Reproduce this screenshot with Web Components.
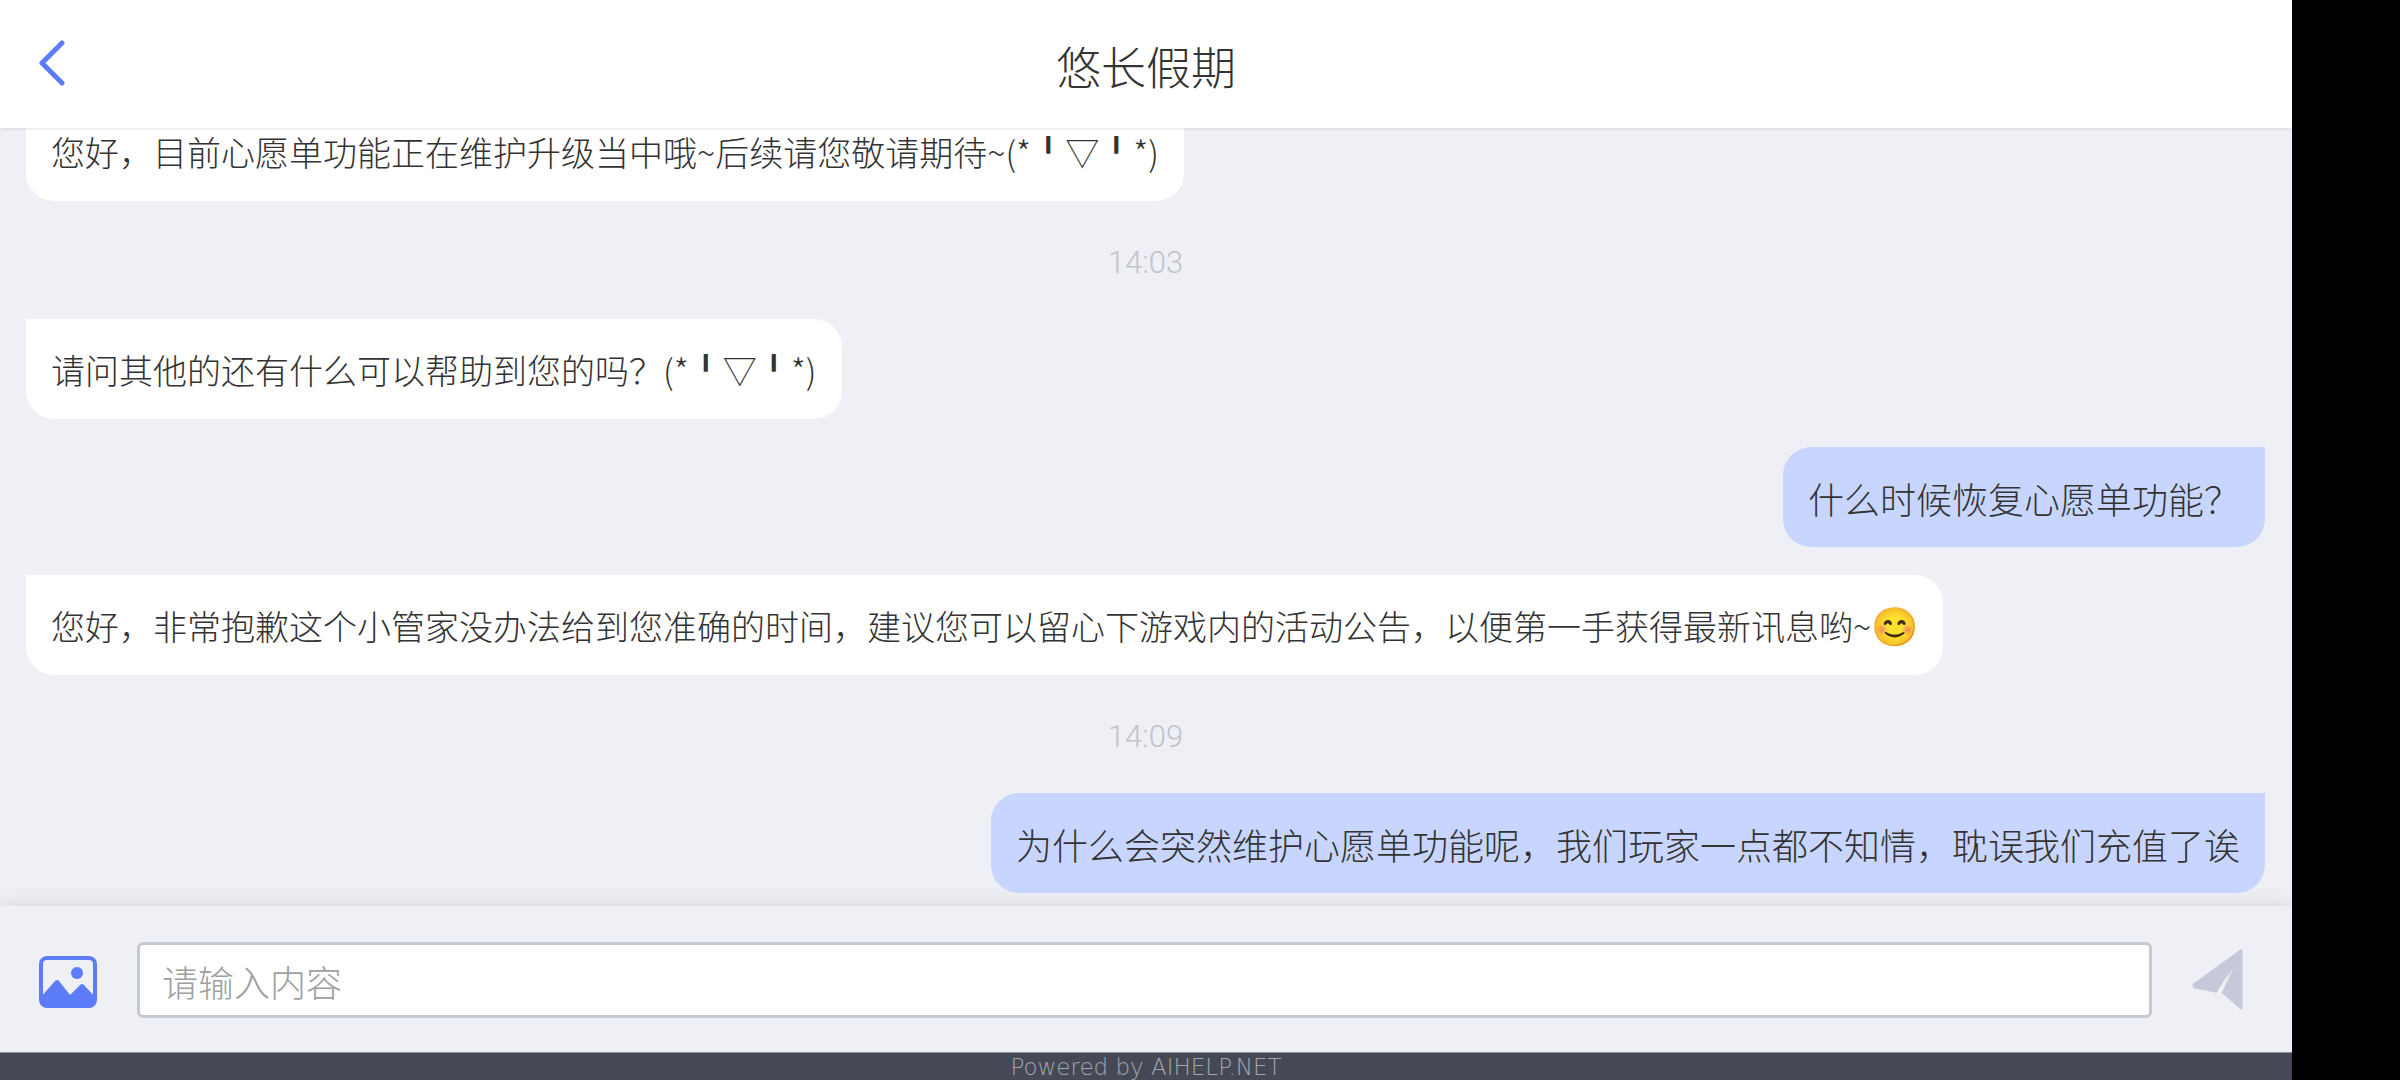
<!DOCTYPE html>
<html lang="zh-CN">
<head>
<meta charset="utf-8">
<meta name="viewport" content="width=device-width, initial-scale=1">
<title>悠长假期</title>
<style>
  html, body {
    height: 100%;
    margin: 0;
  }
  body {
    background: #000;
    color: #333;
    font-family: "Noto Sans CJK SC", sans-serif;
    font-weight: 300;
  }
  .emoji {
    font-size: 38px;
    line-height: 1;
  }
</style>
</head>
<body>

<chat-app>
  <chat-header slot="header">悠长假期</chat-header>
  <chat-bubble>您好，目前心愿单功能正在维护升级当中哦~后续请您敬请期待~(*╹▽╹*)</chat-bubble>
  <chat-time>14:03</chat-time>
  <chat-bubble>请问其他的还有什么可以帮助到您的吗？(*╹▽╹*)</chat-bubble>
  <chat-bubble mine>什么时候恢复心愿单功能？</chat-bubble>
  <chat-bubble>您好，非常抱歉这个小管家没办法给到您准确的时间，建议您可以留心下游戏内的活动公告，以便第一手获得最新讯息哟~<span class="emoji">😊</span></chat-bubble>
  <chat-time>14:09</chat-time>
  <chat-bubble mine>为什么会突然维护心愿单功能呢，我们玩家一点都不知情，耽误我们充值了诶</chat-bubble>
  <chat-composer slot="composer" placeholder="请输入内容"></chat-composer>
  <chat-footer slot="footer">Powered by AIHELP.NET</chat-footer>
</chat-app>

<script>
const define = (name, html, setup) => {
  const template = document.createElement('template');
  template.innerHTML = html;

  customElements.define(name, class extends HTMLElement {
    constructor() {
      super();
      const shadowRoot = this.attachShadow({ mode: 'open' });
      shadowRoot.appendChild(template.content.cloneNode(true));
      if (setup) setup(this, shadowRoot);
    }
  });
};

define('chat-app', `
<style>
  :host {
    display: flex;
    flex-direction: column;
    height: 100vh;
    /* the notch side of the phone stays black */
    margin-right: 108px;
    background: #eff0f6;
  }
  main {
    flex: 1;
    min-height: 0;
    overflow: hidden;
    display: flex;
    flex-direction: column;
    justify-content: flex-end;
    gap: 28px;
    padding: 0 27px 13px 26px;
  }
</style>
<slot name="header"></slot>
<main><slot></slot></main>
<slot name="composer"></slot>
<slot name="footer"></slot>
`);

define('chat-header', `
<style>
  :host {
    position: relative;
    display: grid;
    grid-template-columns: 104px 1fr 104px;
    align-items: center;
    height: 128px;
    background: #fff;
    box-shadow: 0 0 4px rgba(0, 0, 0, 0.16);
  }
  button {
    display: flex;
    width: 104px;
    padding: 0 39px 2px;
    border: 0;
    background: none;
  }
  h1 {
    margin: 0;
    padding-top: 3px;
    font-size: 45px;
    font-weight: 300;
    line-height: 64px;
    text-align: center;
  }
</style>
<button type="button" aria-label="返回">
  <svg width="26" height="46" viewBox="0 0 26 46" fill="none" stroke="#5c7cfa" stroke-width="5" stroke-linecap="round" stroke-linejoin="round">
    <path d="M23 3 L3 23 L23 43"/>
  </svg>
</button>
<h1><slot></slot></h1>
`);

define('chat-bubble', `
<style>
  :host {
    flex: none;
    align-self: flex-start;
    box-sizing: border-box;
    padding: 26px 25px 24px;
    border-radius: 0 28px 28px 28px;
    background: #fff;
    font-size: 34px;
    line-height: 50px;
  }
  :host([mine]) {
    align-self: flex-end;
    border-radius: 28px 0 28px 28px;
    background: #c8d6ff;
    font-size: 36px;
  }
</style>
<slot></slot>
`);

define('chat-time', `
<style>
  :host {
    flex: none;
    padding: 14px 0 8px;
    color: #c2c3c8;
    font-family: Roboto, sans-serif;
    font-size: 31px;
    line-height: 40px;
    text-align: center;
  }
</style>
<slot></slot>
`);

define('chat-composer', `
<style>
  :host {
    position: relative;
    display: block;
    background: #eff0f6;
    box-shadow: 0 0 20px rgba(0, 0, 0, 0.12);
  }
  form {
    display: flex;
    align-items: center;
    gap: 40px;
    padding: 36px 48px 34px 39px;
  }
  button {
    display: flex;
    padding: 0;
    border: 0;
    background: none;
  }
  .picture {
    padding-top: 3px;
  }
  input {
    flex: 1;
    min-width: 0;
    height: 76px;
    box-sizing: border-box;
    padding: 2px 22px 0;
    border: 3px solid #c5c9d4;
    border-radius: 6px;
    background: #fff;
    color: inherit;
    font: inherit;
    font-size: 36px;
  }
  input::placeholder {
    color: #a0a0a0;
  }
</style>
<form>
  <button class="picture" type="button" aria-label="发送图片">
    <svg width="58" height="52" viewBox="0 0 58 52">
      <rect x="2" y="2" width="54" height="48" rx="6" fill="none" stroke="#5c7cfa" stroke-width="4"/>
      <circle cx="38" cy="17" r="6" fill="#5c7cfa"/>
      <path d="M2 41 L16 25 Q18 23 20 25 L31 39 L41 29 Q43 27 45 29 L56 41 V45 Q56 50 51 50 H7 Q2 50 2 45 Z" fill="#5c7cfa"/>
    </svg>
  </button>
  <input type="text" aria-label="消息">
  <button type="submit" aria-label="发送">
    <svg width="52" height="64" viewBox="0 0 52 64" fill="#c6c9d9" stroke="#c6c9d9" stroke-width="3" stroke-linejoin="round">
      <path d="M49 3 L2 37 L3 39 L24 43 L41 15 Z"/>
      <path d="M49 3 L41 17 L31 44 L49 60 Z"/>
      <path d="M42 19 L29 46 L25 45 Z" fill="#eff0f6" stroke="none"/>
    </svg>
  </button>
</form>
`, (host, root) => {
  root.querySelector('input').placeholder = host.getAttribute('placeholder') || '';
  root.querySelector('form').addEventListener('submit', ($event) => $event.preventDefault());
});

define('chat-footer', `
<style>
  :host {
    position: relative;
    display: block;
    box-sizing: border-box;
    height: 28px;
    border-top: 1px solid #8b8e9b;
    background: #454955;
    color: #a3a5ae;
    font-family: "DejaVu Sans", sans-serif;
    font-size: 23px;
    font-weight: 200;
    line-height: 28px;
    text-align: center;
  }
</style>
<slot></slot>
`);
</script>
</body>
</html>
